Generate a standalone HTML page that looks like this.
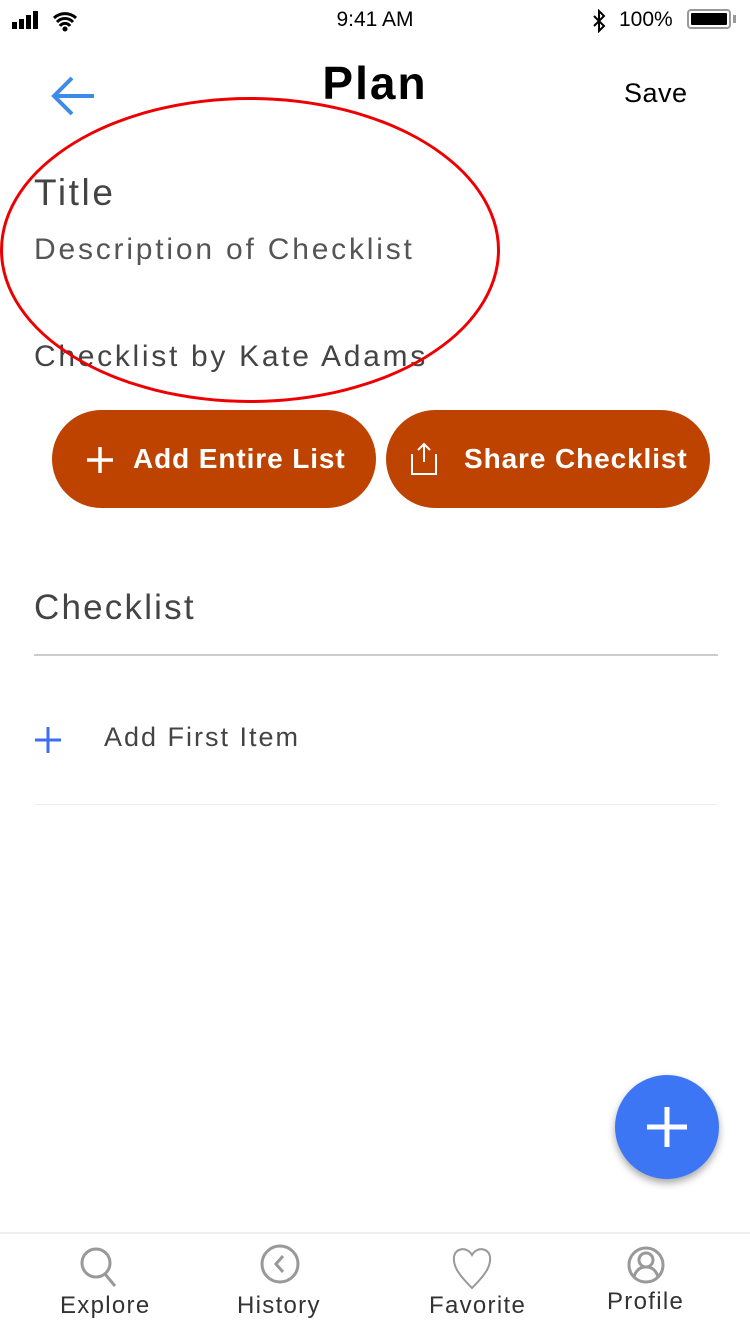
<!DOCTYPE html>
<html><head><style>
body{margin:0;width:750px;height:1334px;background:#fff;position:relative;overflow:hidden;font-family:"Liberation Sans",sans-serif;}
.a{position:absolute;white-space:nowrap}
.btn{position:absolute;top:410px;height:98px;background:#be4200;border-radius:49px;color:#fff;font-size:28px;font-weight:bold;letter-spacing:0.9px}
.t{font-size:24px;color:#333;letter-spacing:1.3px}
</style></head><body>
<svg class="a" style="left:12px;top:10px" width="72" height="22">
<rect x="0" y="12" width="5" height="7" fill="#000"/><rect x="7" y="9" width="5" height="10" fill="#000"/><rect x="14" y="5" width="5" height="14" fill="#000"/><rect x="21" y="1" width="5" height="18" fill="#000"/>
<path d="M42 8a16 16 0 0 1 22 0M45 12a11 11 0 0 1 16 0M48 16a6 6 0 0 1 10 0" stroke="#000" stroke-width="3" fill="none"/><circle cx="53" cy="19" r="2.5" fill="#000"/>
</svg>
<div class="a" style="left:0;width:750px;text-align:center;top:8px;font-size:21px">9:41 AM</div>
<svg class="a" style="left:591px;top:9px" width="16" height="24"><path d="M3 7l10 10-5 5V2l5 5L3 17" stroke="#000" stroke-width="2" fill="none"/></svg>
<div class="a" style="left:619px;top:8px;font-size:21px">100%</div>
<div class="a" style="left:687px;top:9px;width:44px;height:20px;border:2px solid #999;border-radius:4px;box-sizing:border-box;padding:2px"><div style="background:#000;width:100%;height:100%;border-radius:1px"></div></div>
<div class="a" style="left:733px;top:15px;width:3px;height:8px;background:#999"></div>
<svg class="a" style="left:50px;top:74px" width="46" height="44"><path d="M44 22H6M22 4L4 22l18 18" stroke="#3d8ae8" stroke-width="4" fill="none"/></svg>
<div class="a" style="left:0;width:750px;text-align:center;top:56px;font-size:46px;font-weight:bold;letter-spacing:2px">Plan</div>
<div class="a" style="left:624px;top:78px;font-size:27px;letter-spacing:0.5px">Save</div>
<div class="a" style="left:34px;top:172px;font-size:37px;color:#444;letter-spacing:2.6px">Title</div>
<div class="a" style="left:34px;top:233px;font-size:30px;color:#555;letter-spacing:2.8px">Description of Checklist</div>
<div class="a" style="left:34px;top:340px;font-size:30px;color:#444;letter-spacing:2.7px">Checklist by Kate Adams</div>
<div class="a" style="left:0;top:97px;width:500px;height:306px;border:3px solid #e00;border-radius:50%;box-sizing:border-box"></div>
<div class="btn" style="left:52px;width:324px">
<svg class="a" style="left:34px;top:37px" width="28" height="26"><path d="M14 0v26M1 13h26" stroke="#fff" stroke-width="3.5"/></svg>
<span class="a" style="left:81px;top:33px">Add Entire List</span></div>
<div class="btn" style="left:386px;width:324px">
<svg class="a" style="left:22px;top:32px" width="32" height="36"><path d="M16 2v18M10 8l6-6 6 6M4 12v20h24V12" stroke="#fff" stroke-width="2" fill="none"/></svg>
<span class="a" style="left:78px;top:33px">Share Checklist</span></div>
<div class="a" style="left:34px;top:588px;font-size:35px;color:#444;letter-spacing:2.2px">Checklist</div>
<div class="a" style="left:34px;top:654px;width:684px;height:2px;background:#ccc"></div>
<svg class="a" style="left:34px;top:727px" width="28" height="26"><path d="M14 0v26M1 13h26" stroke="#3d6ef5" stroke-width="3"/></svg>
<div class="a" style="left:104px;top:722px;font-size:27px;color:#444;letter-spacing:2px">Add First Item</div>
<div class="a" style="left:34px;top:804px;width:684px;height:1px;background:#eee"></div>
<div class="a" style="left:615px;top:1075px;width:104px;height:104px;border-radius:50%;background:#3d76f5;box-shadow:0 4px 8px rgba(0,0,0,.35)">
<svg style="position:absolute;left:30px;top:30px" width="44" height="44"><path d="M22 2v40M2 22h40" stroke="#fff" stroke-width="5"/></svg></div>
<div class="a" style="left:0;top:1232px;width:750px;height:2px;background:#eee"></div>
<svg class="a" style="left:0;top:1240px" width="750" height="50" fill="none" stroke="#999" stroke-width="3">
<circle cx="96" cy="23" r="14"/><path d="M105 34l10 12"/>
<circle cx="280" cy="24" r="18"/><path d="M283 16l-7 8 7 8"/>
<path d="M472 48C458 34 453 26 454 17c1-9 13-11 18-2 5-9 17-7 18 2 1 9-4 17-18 31z" stroke-width="2"/>
<circle cx="646" cy="25" r="17"/><circle cx="646" cy="20" r="7"/><path d="M634 37c2-7 6-10 12-10s10 3 12 10"/>
</svg>
<div class="a t" style="left:60px;top:1292px">Explore</div>
<div class="a t" style="left:237px;top:1292px">History</div>
<div class="a t" style="left:429px;top:1292px">Favorite</div>
<div class="a t" style="left:607px;top:1288px">Profile</div>
</body></html>
